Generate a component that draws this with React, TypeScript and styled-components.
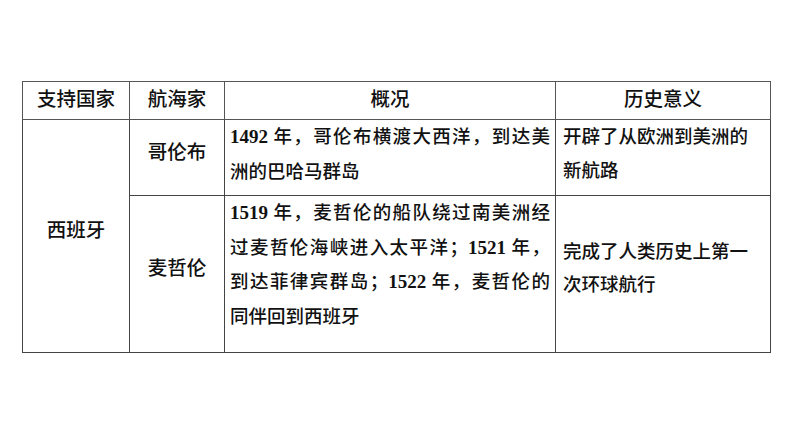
import React from 'react';
import styled, { createGlobalStyle } from 'styled-components';

const GlobalStyle = createGlobalStyle`
  html, body {
    margin: 0;
    padding: 0;
    background: #ffffff;
  }
  body {
    font-family: "Noto Sans CJK SC", "Liberation Serif", serif;
    color: #111111;
  }
`;

const Page = styled.div`
  width: 794px;
  height: 447px;
  padding: 81px 0 0 22px;
  box-sizing: border-box;
`;

const Table = styled.table`
  border-collapse: collapse;
  table-layout: fixed;
  width: 748px;
`;

const HeadCell = styled.th<{ $w: number }>`
  width: ${({ $w }) => $w}px;
  padding: 0 0 6px;
  border: 1px solid #555555;
  font-weight: 500;
  font-size: 19.5px;
  line-height: 28px;
  text-align: center;
  vertical-align: middle;
`;

const Row = styled.tr<{ $h: number }>`
  height: ${({ $h }) => $h}px;
`;

const NameCell = styled.td`
  padding: 0 0 14px;
  border: 1px solid #444444;
  font-size: 19.5px;
  font-weight: 500;
  line-height: 28px;
  text-align: center;
  vertical-align: middle;
`;

const TextCell = styled.td<{ $pad: number; $mid?: boolean }>`
  padding: ${({ $mid }) => ($mid ? '0 0 12px' : '0')} ${({ $pad }) => $pad}px;
  border: 1px solid #444444;
  font-size: 18.5px;
  font-weight: 500;
  line-height: 35.5px;
  vertical-align: ${({ $mid }) => ($mid ? 'middle' : 'top')};
  text-align: left;
`;

const Line = styled.div<{ $full?: boolean }>`
  white-space: nowrap;
  text-align: ${({ $full }) => ($full ? 'justify' : 'left')};
  text-align-last: ${({ $full }) => ($full ? 'justify' : 'left')};
  margin-top: -2px;
`;

const Num = styled.span`
  font-family: "Liberation Serif", serif;
  font-weight: 700;
  font-size: 19px;
`;

const App: React.FC = () => (
  <Page>
    <GlobalStyle />
    <Table>
      <thead>
        <Row $h={38}>
          <HeadCell $w={106}>支持国家</HeadCell>
          <HeadCell $w={94}>航海家</HeadCell>
          <HeadCell $w={330}>概况</HeadCell>
          <HeadCell $w={214}>历史意义</HeadCell>
        </Row>
      </thead>
      <tbody>
        <Row $h={76}>
          <NameCell rowSpan={2}>西班牙</NameCell>
          <NameCell>哥伦布</NameCell>
          <TextCell $pad={5}>
            <Line $full>
              <Num>1492</Num> 年，哥伦布横渡大西洋，到达美
            </Line>
            <Line>洲的巴哈马群岛</Line>
          </TextCell>
          <TextCell $pad={7}>
            <Line>开辟了从欧洲到美洲的</Line>
            <Line>新航路</Line>
          </TextCell>
        </Row>
        <Row $h={157}>
          <NameCell>麦哲伦</NameCell>
          <TextCell $pad={5}>
            <Line $full>
              <Num>1519</Num> 年，麦哲伦的船队绕过南美洲经
            </Line>
            <Line $full>
              过麦哲伦海峡进入太平洋；<Num>1521</Num> 年，
            </Line>
            <Line $full>
              到达菲律宾群岛；<Num>1522</Num> 年，麦哲伦的
            </Line>
            <Line>同伴回到西班牙</Line>
          </TextCell>
          <TextCell $pad={7} $mid>
            <Line>完成了人类历史上第一</Line>
            <Line>次环球航行</Line>
          </TextCell>
        </Row>
      </tbody>
    </Table>
  </Page>
);

export default App;
